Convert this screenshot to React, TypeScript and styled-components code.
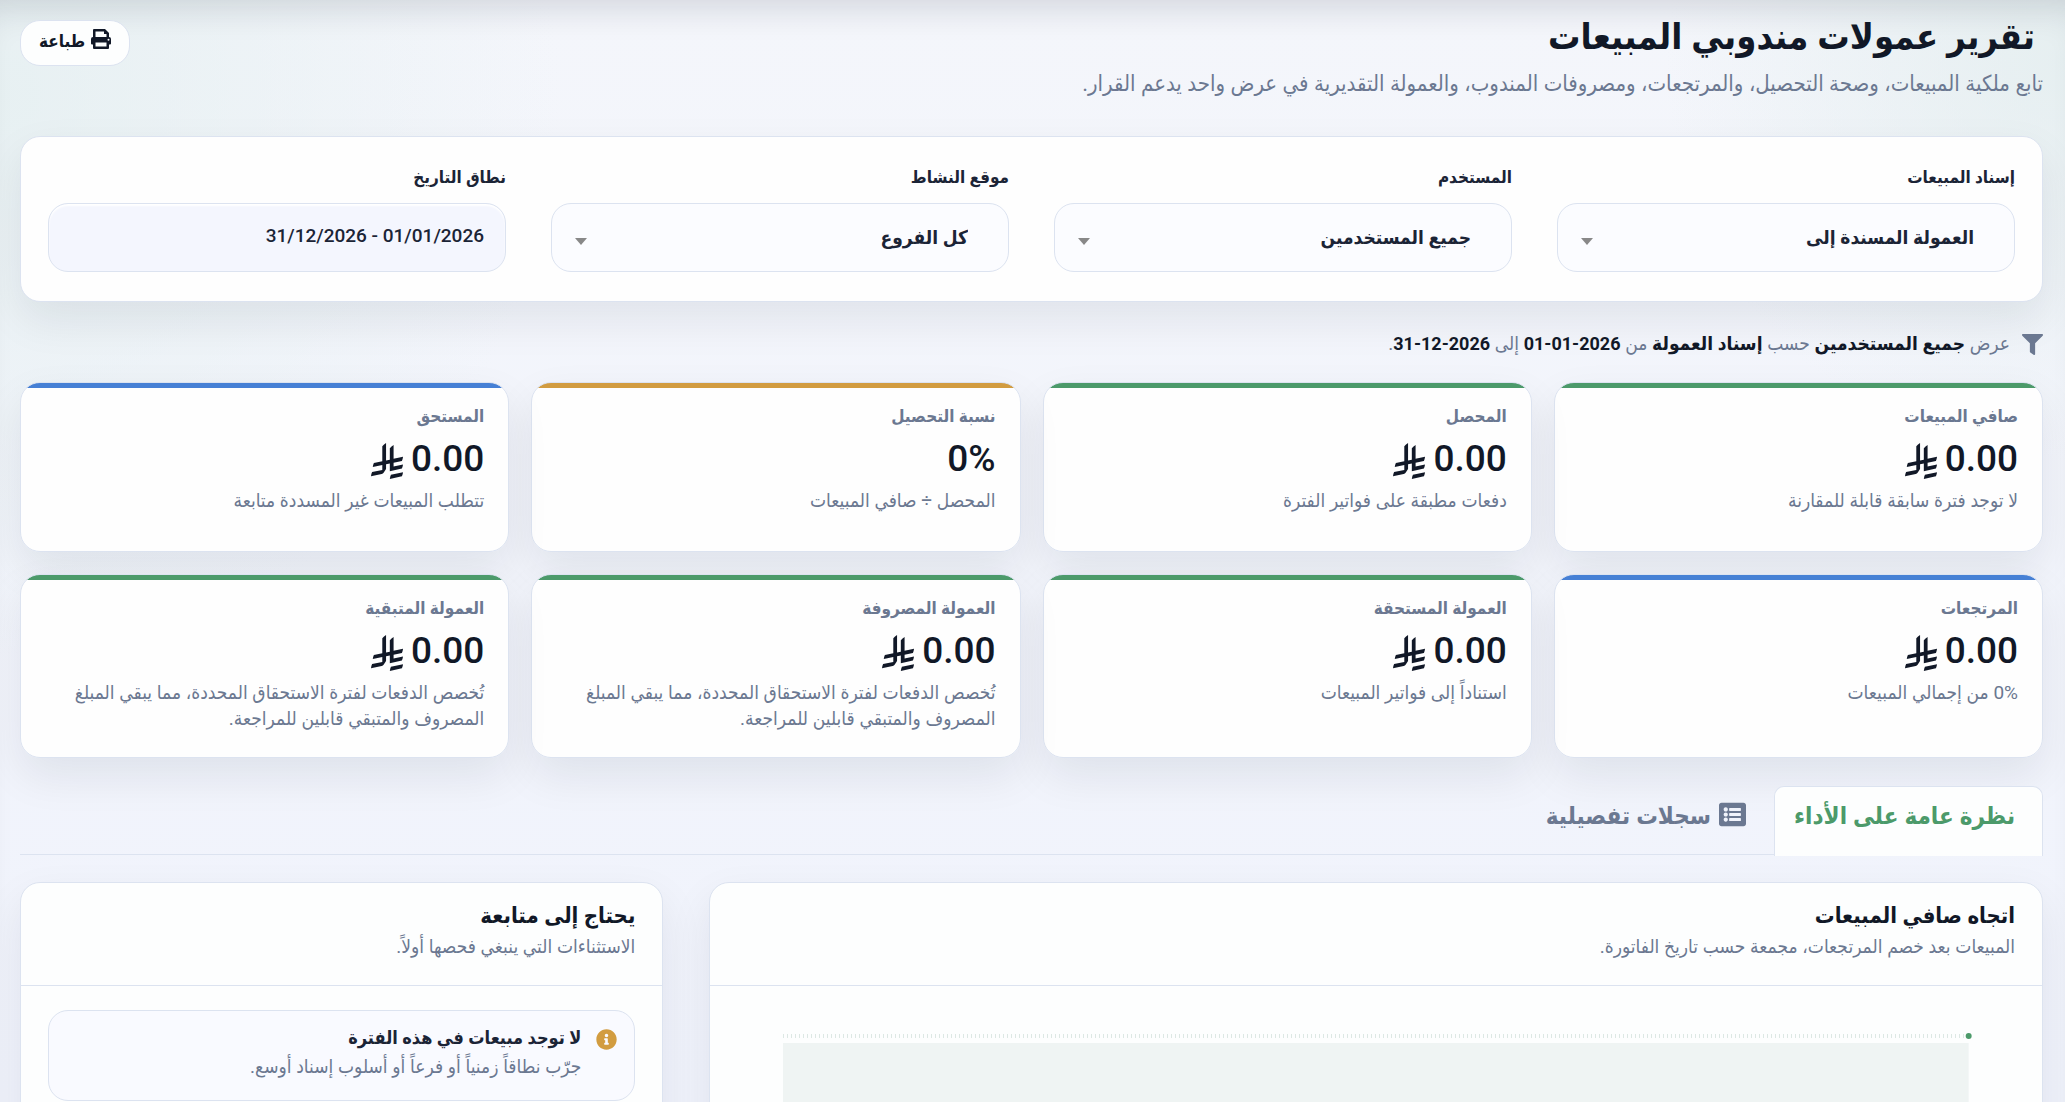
import React, { useId } from "react";
import styled, { createGlobalStyle } from "styled-components";
import { FaFilter, FaInfoCircle, FaListAlt } from "react-icons/fa";

const ink = "#111827";
const muted = "#6b7891";
const line = "#dce3f0";
const green = "#4c9a6a";
const blue = "#4680d5";
const amber = "#d29c40";

const GlobalStyle = createGlobalStyle`
  *, *::before, *::after { box-sizing: border-box; }
  html, body { margin: 0; padding: 0; }
  body {
    color: ${ink};
    font-family: Roboto, "DejaVu Sans Condensed", "DejaVu Sans", sans-serif;
  }
  h1, h2, h3, p { margin: 0; }
  button, select, input { font: inherit; color: inherit; }
`;

const Page = styled.main`
  height: 100vh;
  overflow-y: auto;
  scrollbar-width: none;
  padding: 20px 22px 40px 20px;
  box-shadow: inset 0 30px 36px -24px rgba(15, 23, 42, 0.16);
  background:
    radial-gradient(circle at 0 96px, rgba(228, 239, 240, 0.8), transparent 560px),
    radial-gradient(circle at 100% 60px, rgba(224, 236, 236, 0.7), transparent 400px),
    linear-gradient(180deg, #f4f6fb, #f0f3fc);
`;

const Header = styled.header`
  display: flex;
  justify-content: space-between;
  align-items: flex-start;
  margin-bottom: 36px;
`;

const Title = styled.h1`
  padding-inline-start: 8px;
  font-size: 36px;
  line-height: 34px;
  font-weight: 700;
`;

const Subtitle = styled.p`
  margin-top: 14px;
  font-size: 22px;
  line-height: 32px;
  color: ${muted};
`;

const PrintButton = styled.button`
  display: flex;
  gap: 6px;
  height: 46px;
  padding: 8px 18px;
  border: 1px solid ${line};
  border-radius: 20px;
  background: #fdfefe;
  font-size: 17px;
  line-height: 24px;
  font-weight: 700;
  cursor: pointer;
  svg { width: 20px; height: 20px; }
`;

const shadow = "0 18px 44px rgba(15, 23, 42, 0.08)";

const Filters = styled.form`
  display: grid;
  grid-template-columns: repeat(4, 1fr);
  gap: 45px;
  padding: 26px 27px;
  height: 166px;
  border: 1px solid ${line};
  border-radius: 20px;
  background: #fefefe;
  box-shadow: ${shadow};
`;

const Label = styled.label`
  display: block;
  margin-bottom: 12px;
  font-size: 17px;
  line-height: 28px;
  font-weight: 700;
  color: #1b2436;
`;

const SelectWrap = styled.div`
  position: relative;
  &::after {
    content: "";
    position: absolute;
    inset-inline-end: 24px;
    top: 35px;
    border: 6px solid transparent;
    border-top: 7px solid #888;
    border-bottom: 0;
    pointer-events: none;
  }
`;

const Select = styled.select`
  display: block;
  width: 100%;
  height: 69px;
  padding: 0 40px;
  border: 1px solid ${line};
  border-radius: 20px;
  background: #fbfcff;
  appearance: none;
  font-size: 19px;
  font-weight: 700;
  color: #1b2436;
`;

const DateInput = styled.input`
  display: block;
  width: 100%;
  height: 69px;
  padding: 0 21px 4px;
  border: 1px solid ${line};
  border-radius: 20px;
  background: #f4f6fe;
  box-shadow: inset 0 2px 2px #fff;
  font-size: 19px;
  font-weight: 500;
  direction: ltr;
  text-align: right;
  color: #1b2436;
`;

const Scope = styled.div`
  display: flex;
  align-items: center;
  gap: 12px;
  height: 32px;
  margin: 26px 0 22px;
  font-size: 19px;
  line-height: 32px;
  color: ${muted};
  strong { font-weight: 700; color: ${ink}; }
  svg { font-size: 21px; }
`;

const ScopeDate = styled.strong`
  font-size: 18px;
`;

const Metrics = styled.section`
  display: grid;
  grid-template-columns: repeat(4, 1fr);
  gap: 22px;
`;

const Metric = styled.article<{ $accent: string }>`
  min-height: 170px;
  padding: 18px 24px;
  border: 1px solid ${line};
  border-radius: 20px;
  background: linear-gradient(${(p) => p.$accent} 5px, #fefefe 5px);
  box-shadow: ${shadow};
`;

const MetricLabel = styled.h2`
  font-size: 17px;
  line-height: 30px;
  font-weight: 700;
  color: ${muted};
`;

const MetricValue = styled.div`
  display: flex;
  align-items: center;
  gap: 8px;
  margin-top: 2px;
  font-size: 37px;
  line-height: 52px;
  font-weight: 500;
  svg { width: 32px; height: 36px; margin-top: 4px; fill: currentColor; }
`;

const MetricHint = styled.p`
  margin-top: 3px;
  padding-bottom: 7px;
  font-size: 19px;
  line-height: 26px;
  color: ${muted};
`;

const Tabs = styled.nav`
  display: flex;
  height: 69px;
  margin: 28px 0 27px;
  border-bottom: 1px solid ${line};
`;

const Tab = styled.button<{ $active?: boolean }>`
  display: flex;
  gap: 8px;
  height: 70px;
  padding: 9px 27px 0 19px;
  border: 1px solid ${(p) => (p.$active ? line : "transparent")};
  border-bottom: 0;
  border-radius: 10px 10px 0 0;
  background: ${(p) => (p.$active ? "#fdfefe" : "transparent")};
  font-size: 24px;
  line-height: 40px;
  font-weight: 700;
  color: ${(p) => (p.$active ? green : muted)};
  cursor: pointer;
  svg { margin-top: 5px; font-size: 27px; }
`;

const Panels = styled.div`
  display: grid;
  grid-template-columns: 1333fr 643fr;
  gap: 46px;
`;

const Panel = styled.section`
  border: 1px solid ${line};
  border-radius: 20px;
  background: #fdfefe;
  box-shadow: ${shadow};
`;

const PanelHead = styled.header`
  height: 103px;
  padding: 16px 27px;
  border-bottom: 1px solid ${line};
`;

const PanelTitle = styled.h2`
  font-size: 22px;
  line-height: 34px;
  font-weight: 700;
`;

const PanelText = styled.p`
  font-size: 19px;
  line-height: 28px;
  color: ${muted};
`;

const Chart = styled.svg`
  display: block;
  width: calc(100% - 146px);
  height: 320px;
  margin: 40px 73px 24px;
  overflow: visible;
`;

const Alert = styled.div`
  display: flex;
  gap: 15px;
  margin: 24px 27px;
  padding: 12px 17px 18px;
  min-height: 91px;
  border: 1px solid ${line};
  border-radius: 20px;
  background: #f9faff;
  > svg { flex: none; margin-top: 6px; font-size: 21px; color: ${amber}; }
`;

const AlertTitle = styled.h3`
  font-size: 18px;
  line-height: 30px;
  font-weight: 700;
  color: #1b2436;
`;

const PrinterIcon = () => (
  <svg viewBox="0 0 20 20" fill="currentColor" aria-hidden="true">
    <path
      fillRule="evenodd"
      d="M3 0H14L18 4V8A2 2 0 0 1 20 10V14.5A1 1 0 0 1 19 15.500H18V19A1 1 0 0 1 17 20H3A1 1 0 0 1 2 19V15.500H1A1 1 0 0 1 0 14.500V10A2 2 0 0 1 2 8V1A1 1 0 0 1 3 0ZM4.500 2.500V8H15.500V5H13V2.500ZM4.500 13.500V17.500H15.500V13.500ZM17.500 9.800A1 1 0 1 0 17.500 11.800A1 1 0 1 0 17.500 9.800Z"
    />
  </svg>
);

const Riyal = () => (
  <svg viewBox="0 0 1124 1256" role="img" aria-label="ريال">
    <path d="M699.62,1113.02c-20.06,44.48-33.32,92.75-38.4,143.37l424.51-90.24c20.06-44.47,33.31-92.75,38.4-143.37l-424.51,90.24Z" />
    <path d="M1085.73,895.8c20.06-44.47,33.32-92.75,38.4-143.37l-330.68,70.33v-135.2l292.27-62.11c20.06-44.47,33.32-92.75,38.4-143.37l-330.68,70.27V66.13c-50.67,28.45-95.67,66.32-132.25,110.99v403.35l-132.25,28.11V0c-50.67,28.44-95.67,66.32-132.25,110.99v525.69l-295.91,62.88c-20.06,44.47-33.33,92.75-38.42,143.37l334.33-71.05v170.26l-358.3,76.14c-20.06,44.47-33.32,92.75-38.4,143.37l375.04-79.7c30.53-6.35,56.77-24.4,73.83-49.24l68.78-101.97c7.14-10.55,11.3-23.27,11.3-36.97v-149.98l132.25-28.11v270.4l424.53-90.28Z" />
  </svg>
);

const filters = [
  { label: "إسناد المبيعات", value: "العمولة المسندة إلى" },
  { label: "المستخدم", value: "جميع المستخدمين" },
  { label: "موقع النشاط", value: "كل الفروع" },
];

const payoutHint =
  "تُخصص الدفعات لفترة الاستحقاق المحددة، مما يبقي المبلغ المصروف والمتبقي قابلين للمراجعة.";

const metrics = [
  { label: "صافي المبيعات", value: "0.00", hint: "لا توجد فترة سابقة قابلة للمقارنة", accent: green },
  { label: "المحصل", value: "0.00", hint: "دفعات مطبقة على فواتير الفترة", accent: green },
  { label: "نسبة التحصيل", value: "0%", hint: "المحصل ÷ صافي المبيعات", accent: amber },
  { label: "المستحق", value: "0.00", hint: "تتطلب المبيعات غير المسددة متابعة", accent: blue },
  { label: "المرتجعات", value: "0.00", hint: "0% من إجمالي المبيعات", accent: blue },
  { label: "العمولة المستحقة", value: "0.00", hint: "استناداً إلى فواتير المبيعات", accent: green },
  { label: "العمولة المصروفة", value: "0.00", hint: payoutHint, accent: green },
  { label: "العمولة المتبقية", value: "0.00", hint: payoutHint, accent: green },
];

function FilterSelect({ label, value }: { label: string; value: string }) {
  const id = useId();
  return (
    <div>
      <Label htmlFor={id}>{label}</Label>
      <SelectWrap>
        <Select id={id} defaultValue={value}>
          <option>{value}</option>
        </Select>
      </SelectWrap>
    </div>
  );
}

export default function App() {
  return (
    <Page dir="rtl" lang="ar">
      <GlobalStyle />
      <Header>
        <div>
          <Title>تقرير عمولات مندوبي المبيعات</Title>
          <Subtitle>
            تابع ملكية المبيعات، وصحة التحصيل، والمرتجعات، ومصروفات المندوب، والعمولة التقديرية في عرض واحد يدعم القرار.
          </Subtitle>
        </div>
        <PrintButton type="button">
          <PrinterIcon />
          طباعة
        </PrintButton>
      </Header>

      <Filters>
        {filters.map((f) => (
          <FilterSelect key={f.label} {...f} />
        ))}
        <div>
          <Label htmlFor="range">نطاق التاريخ</Label>
          <DateInput id="range" type="text" readOnly value="31/12/2026 - 01/01/2026" />
        </div>
      </Filters>

      <Scope>
        <FaFilter />
        <p>
          عرض <strong>جميع المستخدمين</strong> حسب <strong>إسناد العمولة</strong> من{" "}
          <ScopeDate dir="ltr">01-01-2026</ScopeDate> إلى <ScopeDate dir="ltr">31-12-2026</ScopeDate>.
        </p>
      </Scope>

      <Metrics>
        {metrics.map((m) => (
          <Metric key={m.label} $accent={m.accent}>
            <MetricLabel>{m.label}</MetricLabel>
            <MetricValue>
              <span dir="ltr">{m.value}</span>
              {!m.value.endsWith("%") && <Riyal />}
            </MetricValue>
            <MetricHint>{m.hint}</MetricHint>
          </Metric>
        ))}
      </Metrics>

      <Tabs>
        <Tab type="button" $active>
          نظرة عامة على الأداء
        </Tab>
        <Tab type="button">
          <FaListAlt />
          سجلات تفصيلية
        </Tab>
      </Tabs>

      <Panels>
        <Panel>
          <PanelHead>
            <PanelTitle>اتجاه صافي المبيعات</PanelTitle>
            <PanelText>المبيعات بعد خصم المرتجعات، مجمعة حسب تاريخ الفاتورة.</PanelText>
          </PanelHead>
          <Chart>
            <rect x="0" y="17" width="100%" height="303" fill="#eff4f3" />
            <line x1="0" x2="100%" y1="10" y2="10" stroke="#dde8e4" strokeWidth="4" strokeDasharray="1 3" />
            <circle cx="100%" cy="10" r="3" fill={green} />
          </Chart>
        </Panel>
        <Panel>
          <PanelHead>
            <PanelTitle>يحتاج إلى متابعة</PanelTitle>
            <PanelText>الاستثناءات التي ينبغي فحصها أولاً.</PanelText>
          </PanelHead>
          <Alert>
            <FaInfoCircle />
            <div>
              <AlertTitle>لا توجد مبيعات في هذه الفترة</AlertTitle>
              <PanelText>جرّب نطاقاً زمنياً أو فرعاً أو أسلوب إسناد أوسع.</PanelText>
            </div>
          </Alert>
        </Panel>
      </Panels>
    </Page>
  );
}
